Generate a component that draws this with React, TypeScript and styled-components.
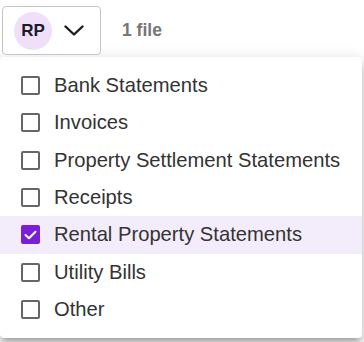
import React, { useState } from 'react';
import styled, { createGlobalStyle } from 'styled-components';

const Global = createGlobalStyle`
  html, body {
    margin: 0;
    padding: 0;
    background: #ffffff;
  }
  body {
    font-family: 'Liberation Sans', Arial, sans-serif;
    -webkit-font-smoothing: antialiased;
  }
`;

const Page = styled.div`
  width: 364px;
  height: 342px;
  padding-top: 6px;
  box-sizing: border-box;
  position: relative;
  overflow: hidden;
`;

const Toolbar = styled.div`
  display: flex;
  align-items: center;
  gap: 21px;
  padding-left: 2px;
`;

const SelectButton = styled.button`
  width: 99px;
  height: 49px;
  box-sizing: border-box;
  border: 1px solid #c4c4c4;
  border-radius: 4px;
  background: #ffffff;
  display: flex;
  align-items: center;
  padding: 0 0 0 11px;
  gap: 12px;
  cursor: pointer;
`;

const Avatar = styled.div`
  width: 38px;
  height: 38px;
  border-radius: 50%;
  background: #efdff8;
  color: #1c1b2b;
  display: flex;
  align-items: center;
  justify-content: center;
  font-family: 'Liberation Sans', Arial, sans-serif;
  font-weight: 700;
  font-size: 17px;
`;

const FileCount = styled.span`
  font-family: 'Liberation Sans', Arial, sans-serif;
  font-weight: 700;
  font-size: 17.5px;
  color: #767676;
`;

const Menu = styled.ul`
  list-style: none;
  margin: 2px 0 0 0;
  padding: 10px 0 10px;
  width: 362px;
  box-sizing: border-box;
  background: #ffffff;
  border-radius: 4px;
  box-shadow: 0 5px 5px -3px rgba(0, 0, 0, 0.2), 0 8px 10px 1px rgba(0, 0, 0, 0.14),
    0 3px 14px 2px rgba(0, 0, 0, 0.12);
`;

const Item = styled.li<{ $selected: boolean }>`
  height: 37.33px;
  display: flex;
  align-items: center;
  gap: 14px;
  padding-left: 21px;
  background: ${({ $selected }) => ($selected ? '#f3ecfb' : 'transparent')};
  color: #333333;
  font-size: 20.2px;
  cursor: pointer;
`;

const Box = styled.span<{ $checked: boolean }>`
  width: 19px;
  height: 19px;
  box-sizing: border-box;
  border-radius: 2px;
  border: ${({ $checked }) => ($checked ? 'none' : '2px solid #666666')};
  background: ${({ $checked }) => ($checked ? '#7a1fd6' : 'transparent')};
  display: flex;
  align-items: center;
  justify-content: center;
  flex-shrink: 0;
`;

const options = [
  'Bank Statements',
  'Invoices',
  'Property Settlement Statements',
  'Receipts',
  'Rental Property Statements',
  'Utility Bills',
  'Other',
];

export default function App() {
  const [selected, setSelected] = useState<string[]>(['Rental Property Statements']);

  const toggle = (o: string) =>
    setSelected((s) => (s.includes(o) ? s.filter((x) => x !== o) : [...s, o]));

  return (
    <Page>
      <Global />
      <Toolbar>
        <SelectButton type="button">
          <Avatar>RP</Avatar>
          <svg width="20" height="11" viewBox="0 0 20 11" fill="none">
            <path d="M1.5 1.5 L10 9.5 L18.5 1.5" stroke="#1c1c1c" strokeWidth="2.4" strokeLinecap="round" strokeLinejoin="round" />
          </svg>
        </SelectButton>
        <FileCount>{selected.length} file</FileCount>
      </Toolbar>
      <Menu>
        {options.map((o) => {
          const checked = selected.includes(o);
          return (
            <Item key={o} $selected={checked} onClick={() => toggle(o)}>
              <Box $checked={checked}>
                {checked && (
                  <svg width="13" height="10" viewBox="0 0 13 10" fill="none">
                    <path d="M1.5 5 L5 8.3 L11.5 1.7" stroke="#ffffff" strokeWidth="2" strokeLinecap="round" strokeLinejoin="round" />
                  </svg>
                )}
              </Box>
              {o}
            </Item>
          );
        })}
      </Menu>
    </Page>
  );
}
